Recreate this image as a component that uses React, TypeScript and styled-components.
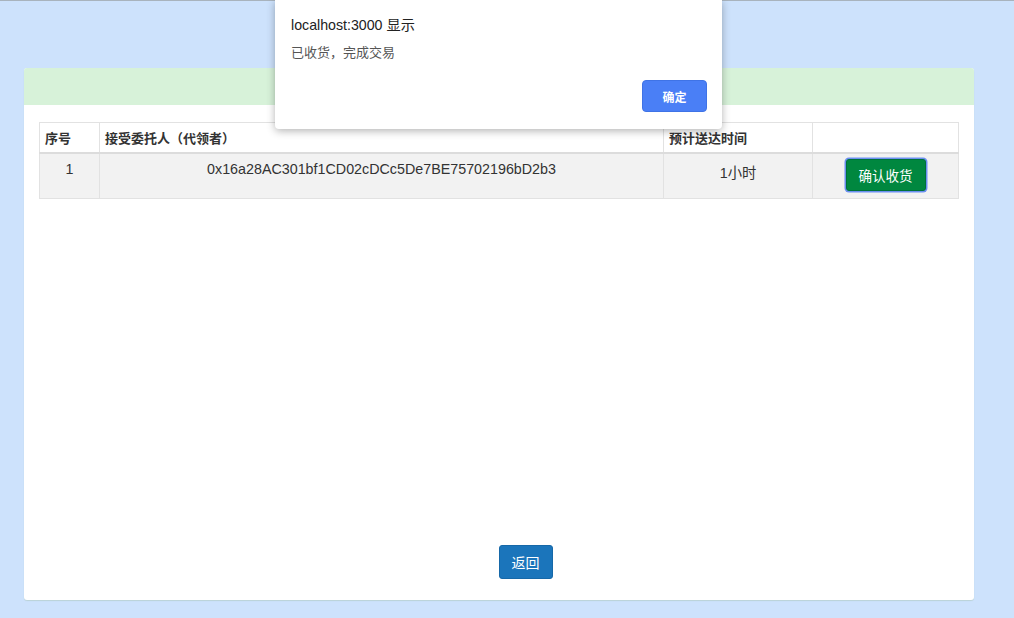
import React from "react";
import styled, { createGlobalStyle } from "styled-components";

const Global = createGlobalStyle`
  html, body { margin: 0; padding: 0; }
  body {
    background: #cde2fc;
    font-family: "Liberation Sans", "Noto Sans CJK SC", sans-serif;
    color: #333;
  }
`;

const Page = styled.div`
  position: relative;
  width: 1014px;
  height: 618px;
  border-top: 1px solid #a8b3bd;
  box-sizing: border-box;
  padding: 67px 40px 0 24px;
`;

const Card = styled.div`
  height: 532px;
  background: #fff;
  border-radius: 3px;
  display: flex;
  flex-direction: column;
  overflow: hidden;
  box-shadow: 0 1px 1px rgba(160, 190, 160, 0.4);
`;

const CardHeader = styled.div`
  height: 37px;
  background: #d7f2d9;
  flex: none;
`;

const CardBody = styled.div`
  flex: 1;
  padding: 17px 16px 0 15px;
`;

const Table = styled.table`
  width: 919px;
  border-collapse: collapse;
  font-size: 13px;
  table-layout: fixed;
`;

const Th = styled.th<{ $w: number }>`
  width: ${(p) => p.$w}px;
  height: 30px;
  border: 1px solid #e2e2e2;
  border-bottom: 2px solid #dcdcdc;
  text-align: left;
  padding: 0 5px;
  font-weight: 600;
  color: #333;
  font-family: "Noto Sans CJK SC", sans-serif;
  font-size: 13px;
  box-sizing: border-box;
`;

const Tr = styled.tr`
  background: #f2f2f2;
`;

const Td = styled.td`
  height: 46px;
  border: 1px solid #e2e2e2;
  text-align: center;
  vertical-align: top;
  padding: 7px 5px 0;
  box-sizing: border-box;
  font-size: 14.3px;
  color: #333;
`;

const ActionTd = styled(Td)`
  padding-top: 5px;
`;

const ConfirmButton = styled.button`
  width: 80px;
  height: 32px;
  background: #00873f;
  color: #fff;
  border: 1px solid #00703a;
  border-radius: 3px;
  box-shadow: 0 0 0 1.5px #6b8ff0;
  font-family: "Noto Sans CJK SC", sans-serif;
  font-size: 13.5px;
  cursor: pointer;
  margin-left: 0;
  padding: 0;
`;

const Footer = styled.div`
  display: flex;
  justify-content: center;
  padding: 0 0 21px 53px;
`;

const BackButton = styled.button`
  width: 54px;
  height: 34px;
  background: #1b75bb;
  color: #fff;
  border: 1px solid #1668a8;
  border-radius: 3px;
  font-family: "Noto Sans CJK SC", sans-serif;
  font-size: 14px;
  cursor: pointer;
  padding: 0;
`;

const Dialog = styled.div`
  position: absolute;
  left: 275px;
  top: -1px;
  width: 447px;
  height: 129px;
  background: #fff;
  border-radius: 0 0 4px 4px;
  box-shadow: 0 2px 8px rgba(0, 0, 0, 0.3);
  box-sizing: border-box;
  padding: 14px 15px 0 16px;
  display: flex;
  flex-direction: column;
`;

const DialogTitle = styled.div`
  font-size: 14.2px;
  color: #222;
  line-height: 22px;
  font-family: "Liberation Sans", "Noto Sans CJK SC", sans-serif;
`;

const DialogMessage = styled.div`
  margin-top: 7px;
  font-size: 13px;
  color: #555;
  line-height: 18px;
  font-family: "Noto Sans CJK SC", sans-serif;
`;

const DialogActions = styled.div`
  display: flex;
  justify-content: flex-end;
  margin-top: 19px;
`;

const OkButton = styled.button`
  width: 65px;
  height: 32px;
  background: #4a7ff6;
  color: #fff;
  border: 1px solid #3f73e6;
  border-radius: 4px;
  font-family: "Noto Sans CJK SC", sans-serif;
  font-weight: bold;
  font-size: 12px;
  cursor: pointer;
  padding: 0;
`;

export default function App() {
  return (
    <>
      <Global />
      <Page>
        <Card>
          <CardHeader />
          <CardBody>
            <Table>
              <thead>
                <tr>
                  <Th $w={60}>序号</Th>
                  <Th $w={564}>接受委托人（代领者）</Th>
                  <Th $w={149}>预计送达时间</Th>
                  <Th $w={146}></Th>
                </tr>
              </thead>
              <tbody>
                <Tr>
                  <Td>1</Td>
                  <Td>0x16a28AC301bf1CD02cDCc5De7BE75702196bD2b3</Td>
                  <Td>1小时</Td>
                  <ActionTd>
                    <ConfirmButton>确认收货</ConfirmButton>
                  </ActionTd>
                </Tr>
              </tbody>
            </Table>
          </CardBody>
          <Footer>
            <BackButton>返回</BackButton>
          </Footer>
        </Card>
        <Dialog>
          <DialogTitle>localhost:3000 显示</DialogTitle>
          <DialogMessage>已收货，完成交易</DialogMessage>
          <DialogActions>
            <OkButton>确定</OkButton>
          </DialogActions>
        </Dialog>
      </Page>
    </>
  );
}
